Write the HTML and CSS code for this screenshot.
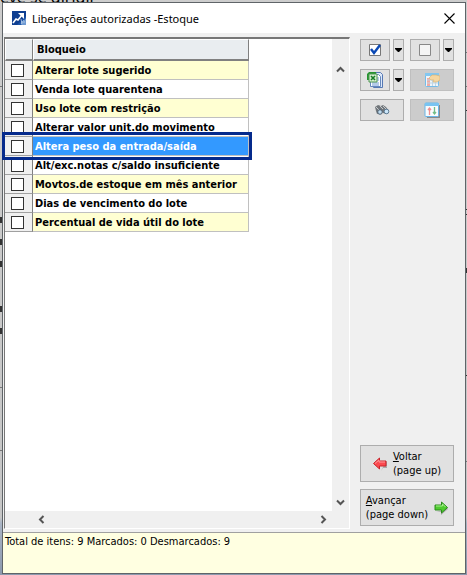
FILE: index.html
```
<!DOCTYPE html>
<html lang="pt-BR">
<head>
    <meta charset="UTF-8">
    <meta name="viewport" content="width=device-width, initial-scale=1.0">
    <title>Liberações autorizadas - Estoque</title>
    <link rel="stylesheet" href="styles.css">
</head>
<body>
    <p class="behind" aria-hidden="true">eve se dirigir</p>
    <div class="window">
        <header class="titlebar">
            <svg class="logo" width="14" height="14" viewBox="0 0 14 14">
                <rect width="14" height="14" fill="#1d55a8"/>
                <path d="M0 0h14v5L5 14H0z" fill="#0f3f91"/>
                <path d="M9 14l5-7v7z" fill="#6f9ad2"/>
                <path d="M1 12l3-4 2 1 4-5" fill="none" stroke="#fff" stroke-width="1.600"/>
                <path d="M6 2h6v6z" fill="#fff"/>
                <path d="M9 8l1 5M12 9l-3 4M9 11h4" stroke="#b9d0ec" stroke-width=".8"/>
            </svg>
            <h1 class="title">Liberações autorizadas -Estoque</h1>
            <button type="button" class="close" aria-label="Fechar">
                <svg width="11" height="11" viewBox="0 0 11 11"><path d="M.5.5l10 10M10.500.5l-10 10" stroke="#000" stroke-width="1.100"/></svg>
            </button>
        </header>

        <main class="content">
            <section class="grid">
                <div class="list">
                    <table>
                        <thead>
                            <tr><th class="mark"></th><th>Bloqueio</th></tr>
                        </thead>
                        <tbody>
                            <tr><td class="mark"><input type="checkbox" id="b1"></td><td><label for="b1">Alterar lote sugerido</label></td></tr>
                            <tr><td class="mark"><input type="checkbox" id="b2"></td><td><label for="b2">Venda lote quarentena</label></td></tr>
                            <tr><td class="mark"><input type="checkbox" id="b3"></td><td><label for="b3">Uso lote com restrição</label></td></tr>
                            <tr><td class="mark"><input type="checkbox" id="b4"></td><td><label for="b4">Alterar valor unit.do movimento</label></td></tr>
                            <tr class="selected"><td class="mark"><input type="checkbox" id="b5"></td><td><label for="b5">Altera peso da entrada/saída</label></td></tr>
                            <tr><td class="mark"><input type="checkbox" id="b6"></td><td><label for="b6">Alt/exc.notas c/saldo insuficiente</label></td></tr>
                            <tr><td class="mark"><input type="checkbox" id="b7"></td><td><label for="b7">Movtos.de estoque em mês anterior</label></td></tr>
                            <tr><td class="mark"><input type="checkbox" id="b8"></td><td><label for="b8">Dias de vencimento do lote</label></td></tr>
                            <tr><td class="mark"><input type="checkbox" id="b9"></td><td><label for="b9">Percentual de vida útil do lote</label></td></tr>
                        </tbody>
                    </table>
                </div>
                <div class="scroll-y">
                    <button type="button" aria-label="Rolar para cima"><svg width="9" height="7" viewBox="0 0 9 7"><path d="M1 5.500L4.500 2 8 5.500" fill="none" stroke="#555" stroke-width="2"/></svg></button>
                    <button type="button" aria-label="Rolar para baixo"><svg width="9" height="7" viewBox="0 0 9 7"><path d="M1 1.500L4.500 5 8 1.500" fill="none" stroke="#555" stroke-width="2"/></svg></button>
                </div>
                <div class="scroll-x">
                    <button type="button" aria-label="Rolar para a esquerda"><svg width="7" height="9" viewBox="0 0 7 9"><path d="M5.500 1L2 4.500 5.500 8" fill="none" stroke="#555" stroke-width="2"/></svg></button>
                    <button type="button" aria-label="Rolar para a direita"><svg width="7" height="9" viewBox="0 0 7 9"><path d="M1.500 1L5 4.500 1.500 8" fill="none" stroke="#555" stroke-width="2"/></svg></button>
                </div>
            </section>

            <aside class="side">
                <div class="tools">
                    <div class="split">
                        <button type="button" aria-label="Marcar todos">
                            <svg width="14" height="14" viewBox="0 0 14 14"><path d="M1.500 1.500h11v11h-11z" fill="#fff" stroke="#777"/><path d="M3 6l3 4 6-8" fill="none" stroke="#0b49b5" stroke-width="2.400"/></svg>
                        </button>
                        <button type="button" class="drop" aria-label="Opções de marcar"><svg width="7" height="4" viewBox="0 0 7 4"><path d="M0 0h7v1L4 4H3L0 1z"/></svg></button>
                    </div>
                    <div class="split">
                        <button type="button" aria-label="Desmarcar todos">
                            <svg width="14" height="14" viewBox="0 0 14 14"><path d="M1.500 1.500h11v11h-11z" fill="#f5f5f5" stroke="#888"/></svg>
                        </button>
                        <button type="button" class="drop" aria-label="Opções de desmarcar"><svg width="7" height="4" viewBox="0 0 7 4"><path d="M0 0h7v1L4 4H3L0 1z"/></svg></button>
                    </div>
                    <div class="split">
                        <button type="button" aria-label="Exportar para Excel">
                            <svg width="16" height="16" viewBox="0 0 16 16">
                                <path d="M6.500.5h7l2 2v13h-9z" fill="#dce8fa" stroke="#5578b4"/>
                                <path d="M3.500 2.500h8l2 2v10h-10z" fill="#fff" stroke="#6688bd"/>
                                <path d="M10 6h2M10 8h2M5 11h7M5 13h7" stroke="#6c97d5"/>
                                <path d="M0 2l2-2h7v2H3v6H0z" fill="#269431"/>
                                <path d="M2 2h8v8H2z" fill="#d7efd0" stroke="#4f9652"/>
                                <path d="M4 4l4 4M8 4L4 8" stroke="#177d27" stroke-width="1.600"/>
                            </svg>
                        </button>
                        <button type="button" class="drop" aria-label="Opções de exportar"><svg width="7" height="4" viewBox="0 0 7 4"><path d="M0 0h7v1L4 4H3L0 1z"/></svg></button>
                    </div>
                    <button type="button" disabled aria-label="Configurar colunas">
                        <svg width="16" height="16" viewBox="0 0 16 16">
                            <rect x="1.500" y="1.500" width="13" height="13" rx="1" fill="#eef5fa" stroke="#75bce9"/>
                            <path d="M1 1h14v3H1z" fill="#83c7f0"/>
                            <path d="M3 6h3v8H3z" fill="#f2aaa1"/>
                            <path d="M3 8h11M3 11h11M8.500 5v9M11.500 5v9" stroke="#bfd6e5"/>
                            <path d="M5 6l3-3h4l4 1v4l-3 2H9l1-2H7z" fill="#f4d6a0" stroke="#d5b06e" stroke-width=".6"/>
                        </svg>
                    </button>
                    <button type="button" aria-label="Localizar">
                        <svg width="16" height="12" viewBox="0 0 16 12">
                            <path d="M1 3l3-2 3 1 2-1 3 2 3 4-2 3-4-1-2-2-1 2-3 1-1-3z" fill="#72777b"/>
                            <path d="M2 3l3 3M6 2l3 3M9 2l3 3" stroke="#c7cbce"/>
                            <circle cx="6" cy="8" r="2.300" fill="#bedbef" stroke="#4d5f70"/>
                            <circle cx="12.500" cy="7.500" r="2.300" fill="#cce7fa" stroke="#5d7b94"/>
                        </svg>
                    </button>
                    <button type="button" disabled aria-label="Ordenar">
                        <svg width="16" height="16" viewBox="0 0 16 16">
                            <path d="M3 3h13v13H3z" fill="#888"/>
                            <rect x="1" y="1" width="13.500" height="13.500" rx="1" fill="#f8fbfd" stroke="#69b6e8"/>
                            <path d="M1 1h14v3H1z" fill="#79c4f2"/>
                            <path d="M5.500 13V6M4 8l1.500-2L7 8" fill="none" stroke="#f08f8f" stroke-width="1.300"/>
                            <path d="M10.500 5v7M9 10l1.500 2 1.500-2" fill="none" stroke="#72bd87" stroke-width="1.300"/>
                        </svg>
                    </button>
                </div>

                <nav class="pager">
                    <button type="button">
                        <svg width="14" height="14" viewBox="0 0 14 14"><path d="M8 14l2-3h4V5l-1-1-4 8z" fill="#aaa"/><path d="M.5 6.500l6-5.500v3h6.500v5H6.500v3z" fill="#fb4a50" stroke="#c8242b"/><path d="M2 6.500L6 3v2h6" fill="none" stroke="#ff9a9c"/></svg>
                        <span><u>V</u>oltar<br>(page up)</span>
                    </button>
                    <button type="button">
                        <span><u>A</u>vançar<br>(page down)</span>
                        <svg width="14" height="14" viewBox="0 0 14 14"><path d="M2 11h5v3l7-6-1-2-6 4z" fill="#aaa"/><path d="M13.500 6.500L7.500 1v3H1v5h6.500v3z" fill="#4fcb2f" stroke="#2c8b1c"/><path d="M2 5h6.500V3l3 3" fill="none" stroke="#a5ef8d"/></svg>
                    </button>
                </nav>
            </aside>
        </main>

        <footer class="status">Total de itens: 9 Marcados: 0 Desmarcados: 9</footer>
    </div>
</body>
</html>
```
FILE: styles.css
```
* {
    box-sizing: border-box;
}

body {
    margin: 0;
    height: 100vh;
    padding: 2px 1px 1px 2px;
    background: linear-gradient(to bottom, #cdcdcd 0, #c6c6c6 90%, #a9b4c5 91%, #8c99ad 100%);
    font-family: "DejaVu Sans Condensed", "DejaVu Sans", sans-serif;
    font-size: 11px;
    color: #000;
    overflow: hidden;
}

button {
    display: flex;
    align-items: center;
    justify-content: center;
    padding: 0;
    border: 1px solid #adadad;
    background-color: #e1e1e1;
    color: #000;
    font: inherit;
}

button:disabled {
    background-color: #cccccc;
    border-color: #bfbfbf;
}

/* page left open under the dialog */
.behind {
    position: absolute;
    top: -12px;
    left: 0;
    margin: 0;
    font-family: "Noto Sans", sans-serif;
    font-size: 16px;
    line-height: 18px;
    z-index: -1;
}

/* lines and letters that show beside the dialog */
body::before,
body::after {
    content: "";
    position: absolute;
    top: 0;
    width: 2px;
    height: 100%;
    background-repeat: no-repeat;
    background-image:
        linear-gradient(#333, #333), linear-gradient(#333, #333), linear-gradient(#333, #333),
        linear-gradient(#333, #333), linear-gradient(#333, #333), linear-gradient(#777, #777),
        linear-gradient(#777, #777), linear-gradient(#777, #777);
    z-index: -1;
}

body::before {
    left: 0;
    background-size: 2px 6px, 2px 6px, 2px 6px, 2px 6px, 2px 6px, 2px 1px, 2px 1px, 2px 1px;
    background-position: 0 217px, 0 239px, 0 261px, 0 306px, 0 328px, 0 86px, 0 387px, 0 450px;
}

body::after {
    right: 0;
    background-size: 2px 1px, 2px 1px, 2px 1px, 2px 5px, 2px 1px, 2px 1px, 2px 1px, 2px 1px;
    background-position: 0 110px, 0 209px, 0 214px, 0 268px, 0 375px, 0 52px, 0 86px, 0 461px;
}

.window {
    display: flex;
    flex-direction: column;
    height: 100%;
    border: 1px solid #5f6468;
    background-color: #f0f0f0;
}

.titlebar {
    display: flex;
    align-items: center;
    height: 30px;
    padding: 0 10px 0 9px;
    background-color: #fff;
}

.title {
    flex: 1;
    margin: 0 0 0 6px;
    font-family: "Noto Sans", sans-serif;
    font-size: 11px;
    font-weight: normal;
}

.close {
    border: none;
    background: none;
}

.content {
    flex: 1;
    display: flex;
    min-height: 0;
    padding: 4px 11px 3px 1px;
}

.grid {
    flex: 1;
    display: grid;
    grid-template-columns: 1fr 17px;
    grid-template-rows: 1fr 17px;
    border: 1px solid #fff;
    border-top: 2px solid #777;
    border-left: 1px solid #777;
}

.list {
    background-color: #fff;
}

table {
    border-collapse: separate;
    border-spacing: 0;
    width: 244px;
    table-layout: fixed;
    font-weight: bold;
}

th {
    height: 22px;
    padding: 0 3px;
    border: 1px solid #fff;
    border-right: 1px solid #808080;
    border-bottom: 2px solid #808080;
    background-color: #e9edf0;
    text-align: left;
}

td {
    height: 19px;
    padding: 0 2px;
    border-right: 1px solid #c0c0c0;
    border-bottom: 1px solid #c0c0c0;
    white-space: nowrap;
}

tbody tr:nth-child(odd) td {
    background-color: #ffffd2;
}

.mark {
    width: 28px;
}

tbody tr td.mark {
    padding: 0 0 0 6px;
    border-right-color: #808080;
    border-bottom-color: #a0a0a0;
    background-color: #f0f0f0;
}

input[type="checkbox"] {
    display: block;
    appearance: none;
    width: 13px;
    height: 13px;
    margin: 0;
    border: 1px solid #333;
    background-color: #fff;
}

.selected {
    position: relative;
}

tbody tr.selected td:last-child {
    background-color: #3399ff;
    color: #fff;
}

/* frame around the current row */
.selected td:last-child::after {
    content: "";
    position: absolute;
    top: -5px;
    right: -3px;
    bottom: -4px;
    left: -3px;
    border: 3px solid #052a8c;
    pointer-events: none;
}

.scroll-y,
.scroll-x {
    display: flex;
    justify-content: space-between;
    background-color: #f0f0f0;
}

.scroll-y {
    flex-direction: column;
    padding: 22px 0 0;
}

.scroll-x {
    padding-left: 28px;
}

.scroll-y button,
.scroll-x button {
    width: 17px;
    height: 17px;
    border: none;
    background: none;
}

.side {
    display: flex;
    flex-direction: column;
    justify-content: space-between;
    width: 104px;
    padding: 2px 0 3px 10px;
}

.tools {
    display: grid;
    grid-template-columns: 44px 44px;
    grid-auto-rows: 22px;
    gap: 8px 6px;
}

.split {
    display: grid;
    grid-template-columns: 30px 11px;
    gap: 3px;
}

.pager {
    display: grid;
    gap: 7px;
}

.pager button {
    height: 37px;
    gap: 6px;
    line-height: 14px;
    text-align: left;
}

.status {
    height: 41px;
    padding: 1px 2px;
    border-top: 1px solid #a0a0a0;
    background-color: #ffffe1;
    line-height: 15px;
}
```
